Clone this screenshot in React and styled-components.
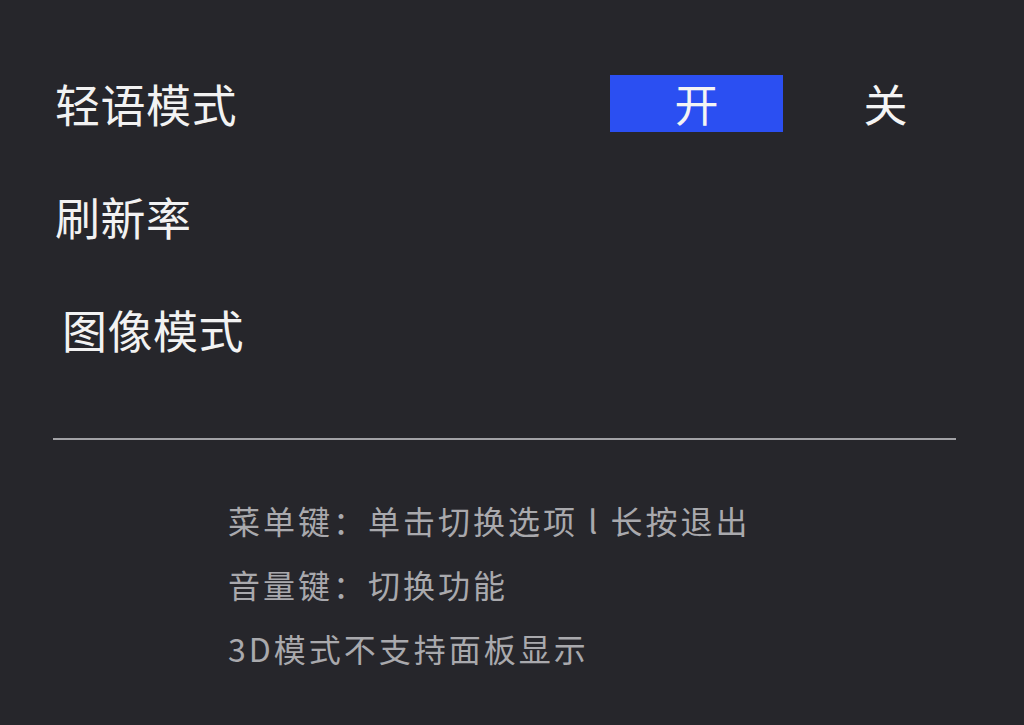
import React from "react";
import styled, { createGlobalStyle } from "styled-components";

const GlobalStyle = createGlobalStyle`
  html, body {
    margin: 0;
    padding: 0;
    background: #26262b;
  }
  body {
    font-family: "Noto Sans CJK SC", "Noto Sans", sans-serif;
  }
`;

const Page = styled.div`
  width: 1024px;
  height: 725px;
  box-sizing: border-box;
  padding: 47px 52px 0 55px;
  background: #26262b;
  overflow: hidden;
`;

const Row = styled.div`
  height: 113px;
  display: flex;
  align-items: center;
  justify-content: space-between;
  padding-left: ${(p) => p.indent || 0}px;
`;

const Label = styled.span`
  font-size: 45px;
  line-height: 1;
  color: #f2f2f2;
  letter-spacing: 0.5px;
`;

const Toggle = styled.div`
  display: flex;
  gap: 16px;
  margin-top: -1px;
`;

const Option = styled.div`
  width: 173px;
  height: 57px;
  display: flex;
  align-items: center;
  justify-content: center;
  font-size: 44px;
  line-height: 1;
  color: #f4f4f4;
  background: ${(p) => (p.active ? "#2b4ff2" : "transparent")};
`;

const Divider = styled.hr`
  margin: 52px 0 0 -2px;
  width: 903px;
  border: none;
  height: 2px;
  background: #a2a2a6;
`;

const Hints = styled.div`
  padding: 48px 0 0 173px;
`;

const Hint = styled.div`
  font-size: 32px;
  line-height: 64px;
  letter-spacing: 3px;
  color: #a9a9ad;
`;

const rows = [
  { label: "轻语模式", toggle: true },
  { label: "刷新率" },
  { label: "图像模式", indent: 7 },
];

const hints = ["菜单键：单击切换选项 l 长按退出", "音量键：切换功能", "3D模式不支持面板显示"];

export default function App() {
  return (
    <Page>
      <GlobalStyle />
      {rows.map((r) => (
        <Row key={r.label} indent={r.indent}>
          <Label>{r.label}</Label>
          {r.toggle && (
            <Toggle>
              <Option active>开</Option>
              <Option>关</Option>
            </Toggle>
          )}
        </Row>
      ))}
      <Divider />
      <Hints>
        {hints.map((h) => (
          <Hint key={h}>{h}</Hint>
        ))}
      </Hints>
    </Page>
  );
}
